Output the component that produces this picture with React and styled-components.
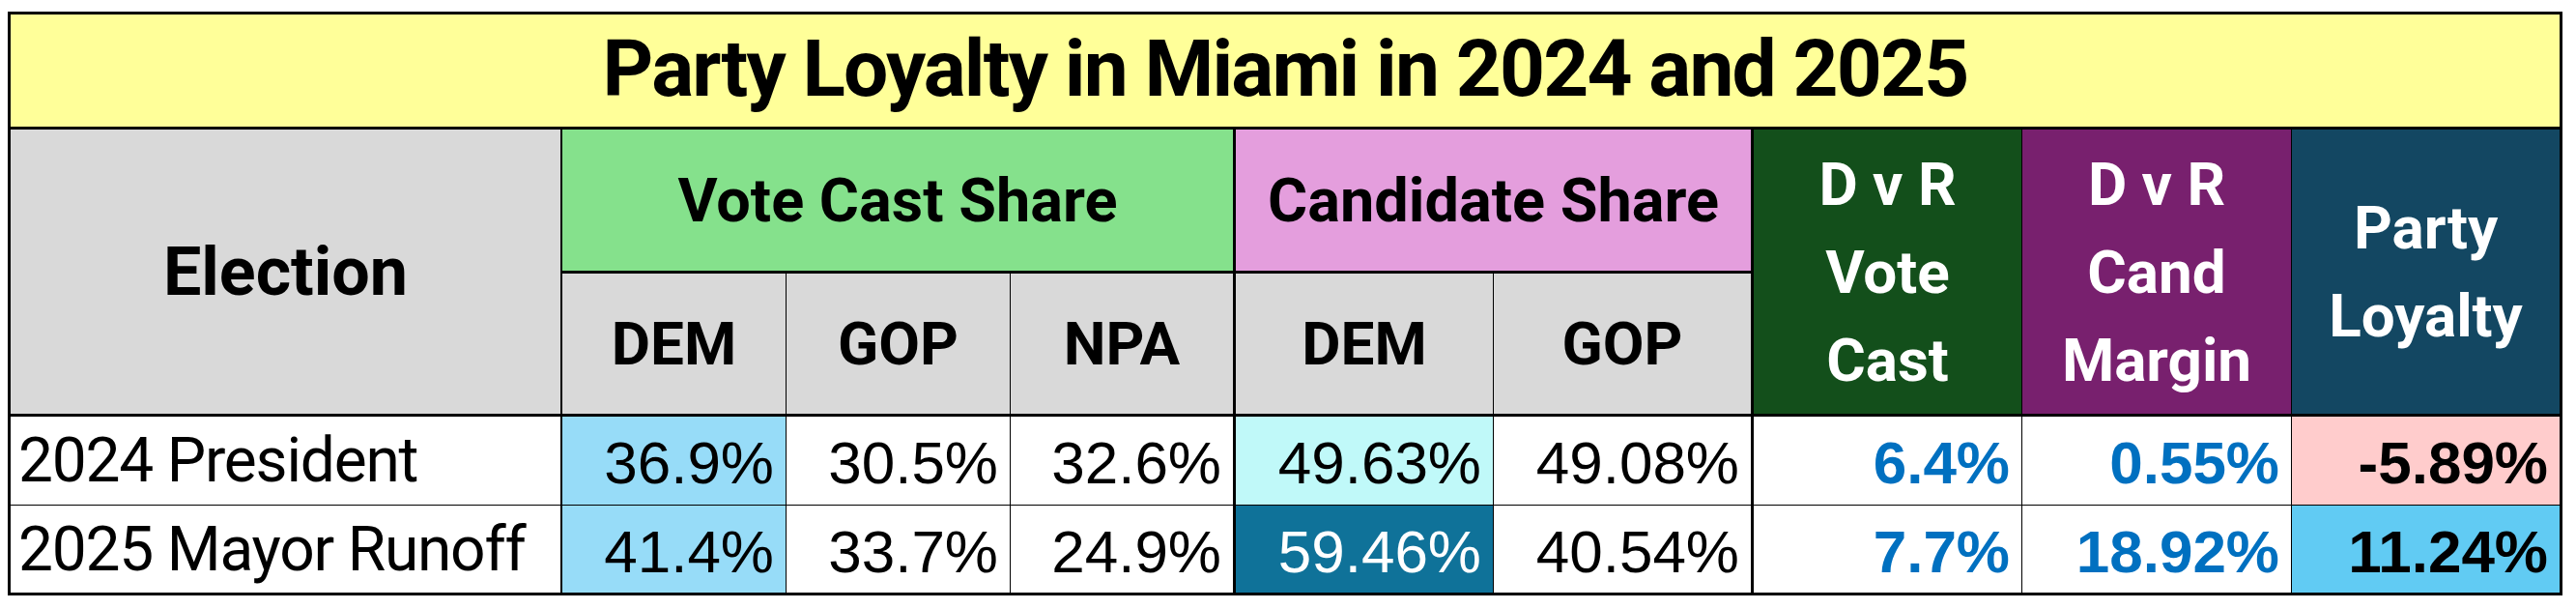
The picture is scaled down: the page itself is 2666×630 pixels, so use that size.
import styled, { createGlobalStyle } from 'styled-components'

const GlobalStyle = createGlobalStyle`
	html, body {
		margin: 0;
		padding: 0;
		background: #ffffff;
	}
	* {
		box-sizing: border-box;
	}
`

const columns = [571, 232, 232, 233, 267, 269, 278, 279, 277]
const rowHeights = [119, 149, 148, 92, 90]

const rows = [
	{
		label: '2024 President',
		cells: [
			{ value: '36.9%', bg: '#97dcf8' },
			{ value: '30.5%' },
			{ value: '32.6%', r: 3 },
			{ value: '49.63%', bg: '#c0f9f9' },
			{ value: '49.08%', r: 3 },
			{ value: '6.4%', color: '#0070c0', bold: true },
			{ value: '0.55%', color: '#0070c0', bold: true },
			{ value: '-5.89%', bg: '#ffcccc', bold: true, r: 0 },
		],
	},
	{
		label: '2025 Mayor Runoff',
		last: true,
		cells: [
			{ value: '41.4%', bg: '#97dcf8' },
			{ value: '33.7%' },
			{ value: '24.9%', r: 3 },
			{ value: '59.46%', bg: '#0f7299', color: '#ffffff' },
			{ value: '40.54%', r: 3 },
			{ value: '7.7%', color: '#0070c0', bold: true },
			{ value: '18.92%', color: '#0070c0', bold: true },
			{ value: '11.24%', bg: '#61cbf3', bold: true, r: 0 },
		],
	},
]

const App = () => {
	return (
		<>
			<GlobalStyle />
			<Page>
				<Sheet>
					<Title>Party Loyalty in Miami in 2024 and 2025</Title>

					<HeaderCell $bg="#d9d9d9" $rowSpan={2} $r={2} $size={70}>Election</HeaderCell>
					<HeaderCell $bg="#85e18c" $colSpan={3} $r={3} $size={63}>Vote Cast Share</HeaderCell>
					<HeaderCell $bg="#e49edd" $colSpan={2} $r={3} $size={63}>Candidate Share</HeaderCell>
					<HeaderCell $bg="#134f1b" $color="#ffffff" $rowSpan={2} $r={1}>
						D v R<br />Vote<br />Cast
					</HeaderCell>
					<HeaderCell $bg="#78206e" $color="#ffffff" $rowSpan={2} $r={1}>
						D v R<br />Cand<br />Margin
					</HeaderCell>
					<HeaderCell $bg="#134762" $color="#ffffff" $rowSpan={2} $r={0}>
						Party<br />Loyalty
					</HeaderCell>

					<HeaderCell $bg="#d9d9d9" $r={1}>DEM</HeaderCell>
					<HeaderCell $bg="#d9d9d9" $r={1}>GOP</HeaderCell>
					<HeaderCell $bg="#d9d9d9" $r={3}>NPA</HeaderCell>
					<HeaderCell $bg="#d9d9d9" $r={1}>DEM</HeaderCell>
					<HeaderCell $bg="#d9d9d9" $r={3}>GOP</HeaderCell>

					{rows.map((row) => (
						<Row key={row.label} row={row} />
					))}
				</Sheet>
			</Page>
		</>
	)
}

const Row = ({ row }) => (
	<>
		<LabelCell $b={row.last ? 0 : 1}>{row.label}</LabelCell>
		{row.cells.map((cell, i) => (
			<ValueCell
				key={i}
				$bg={cell.bg}
				$color={cell.color}
				$bold={cell.bold}
				$r={cell.r ?? 1}
				$b={row.last ? 0 : 1}
			>
				{cell.value}
			</ValueCell>
		))}
	</>
)

export default App

const Page = styled.div`
	padding: 12px 0 0 8px;
`

const Sheet = styled.div`
	display: grid;
	grid-template-columns: ${columns.map((w) => `${w}px`).join(' ')};
	grid-template-rows: ${rowHeights.map((h) => `${h}px`).join(' ')};
	width: 2644px;
	border: 3px solid #000000;
	background: #ffffff;
`

const Cell = styled.div`
	display: flex;
	align-items: center;
	overflow: hidden;
	background: ${({ $bg }) => $bg || '#ffffff'};
	color: ${({ $color }) => $color || '#000000'};
	border-right: ${({ $r }) => $r ?? 0}px solid #000000;
	border-bottom: ${({ $b }) => $b ?? 0}px solid #000000;
`

const Title = styled(Cell)`
	grid-column: 1 / -1;
	justify-content: center;
	background: #ffff99;
	border-bottom: 3px solid #000000;
	font-family: Roboto, 'Liberation Sans', sans-serif;
	font-weight: 700;
	font-size: 82px;
	letter-spacing: -1.8px;
	padding-bottom: 4px;
`

const HeaderCell = styled(Cell).attrs(({ $b }) => ({ $b: $b ?? 3 }))`
	grid-column: span ${({ $colSpan }) => $colSpan || 1};
	grid-row: span ${({ $rowSpan }) => $rowSpan || 1};
	justify-content: center;
	text-align: center;
	font-family: Roboto, 'Liberation Sans', sans-serif;
	font-weight: 700;
	font-size: ${({ $size }) => $size || 62}px;
	line-height: 91px;
`

const LabelCell = styled(Cell)`
	border-right: 2px solid #000000;
	padding-left: 8px;
	font-family: Roboto, 'Liberation Sans', sans-serif;
	font-size: 64px;
	letter-spacing: -1.2px;
	white-space: nowrap;
`

const ValueCell = styled(Cell)`
	justify-content: flex-end;
	padding: 4px 12px 0 0;
	font-family: 'Liberation Sans', Arial, sans-serif;
	font-weight: ${({ $bold }) => ($bold ? 700 : 400)};
	font-size: 62px;
	white-space: nowrap;
`
